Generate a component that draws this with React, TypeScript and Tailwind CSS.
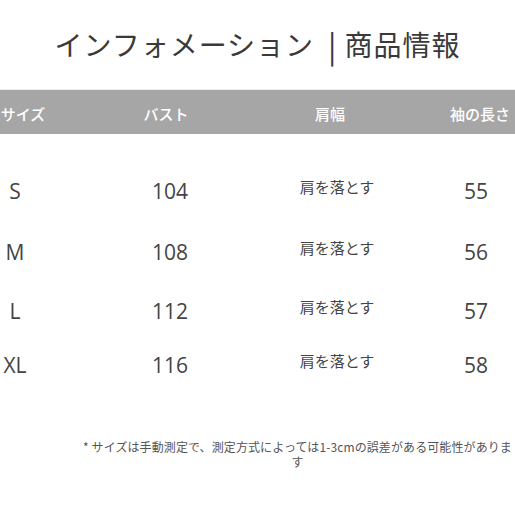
import React from 'react';

const rows = [
  { size: 'S', bust: '104', shoulder: '肩を落とす', sleeve: '55', h: 'h-[60px]' },
  { size: 'M', bust: '108', shoulder: '肩を落とす', sleeve: '56', h: 'h-[62px]' },
  { size: 'L', bust: '112', shoulder: '肩を落とす', sleeve: '57', h: 'h-[56px]' },
  { size: 'XL', bust: '116', shoulder: '肩を落とす', sleeve: '58', h: 'h-[52px]' },
];

const jp = "font-['Noto_Sans_CJK_JP',sans-serif]";
const num = "font-['Open_Sans','Noto_Sans_CJK_JP',sans-serif]";

export default function App() {
  return (
    <div className="w-[515px] h-[515px] overflow-hidden bg-white">
      {/* Title */}
      <div className="h-[89px] flex items-center justify-center pb-[1px]">
        <h1 className={`${jp} text-[28px] leading-none font-normal text-[#3a3a3a] flex items-center`}>
          <span className="tracking-[1px]">インフォメーション</span>
          <span className="ml-[14px] mr-[8px] text-[31px]">|</span>
          <span className="tracking-[1px]">商品情報</span>
        </h1>
      </div>

      {/* Header bar */}
      <div className="border-t border-[#ececec] bg-[#a6a6a6] h-[45px] flex items-center pt-[4px] text-white text-[15px] font-medium">
        <div className={`${jp} w-[46px] text-center`}>サイズ</div>
        <div className={`${jp} ml-[80px] w-[80px] text-center`}>バスト</div>
        <div className={`${jp} ml-[84px] w-[80px] text-center`}>肩幅</div>
        <div className={`${jp} ml-[75px] w-[70px] text-center`}>袖の長さ</div>
      </div>

      {/* Rows */}
      <div className="pt-[28px]">
        {rows.map((r) => (
          <div key={r.size} className={`${r.h} flex items-center text-[#444]`}>
            <div className={`${num} w-[30px] text-center text-[21px]`}>{r.size}</div>
            <div className={`${num} ml-[100px] w-[80px] text-center text-[21px]`}>{r.bust}</div>
            <div className={`${jp} ml-[77px] w-[100px] text-center text-[15px] pb-[9px]`}>{r.shoulder}</div>
            <div className={`${num} ml-[59px] w-[60px] text-center text-[21px]`}>{r.sleeve}</div>
          </div>
        ))}
      </div>

      {/* Note */}
      <div className="mt-[47px] ml-[80px] w-[435px]">
        <p className={`${jp} text-[12px] leading-[15px] text-[#555] text-center tracking-[0.1px]`}>
          * サイズは手動測定で、測定方式によっては1-3cmの誤差がある可能性がありま
          <br />
          す
        </p>
      </div>
    </div>
  );
}
